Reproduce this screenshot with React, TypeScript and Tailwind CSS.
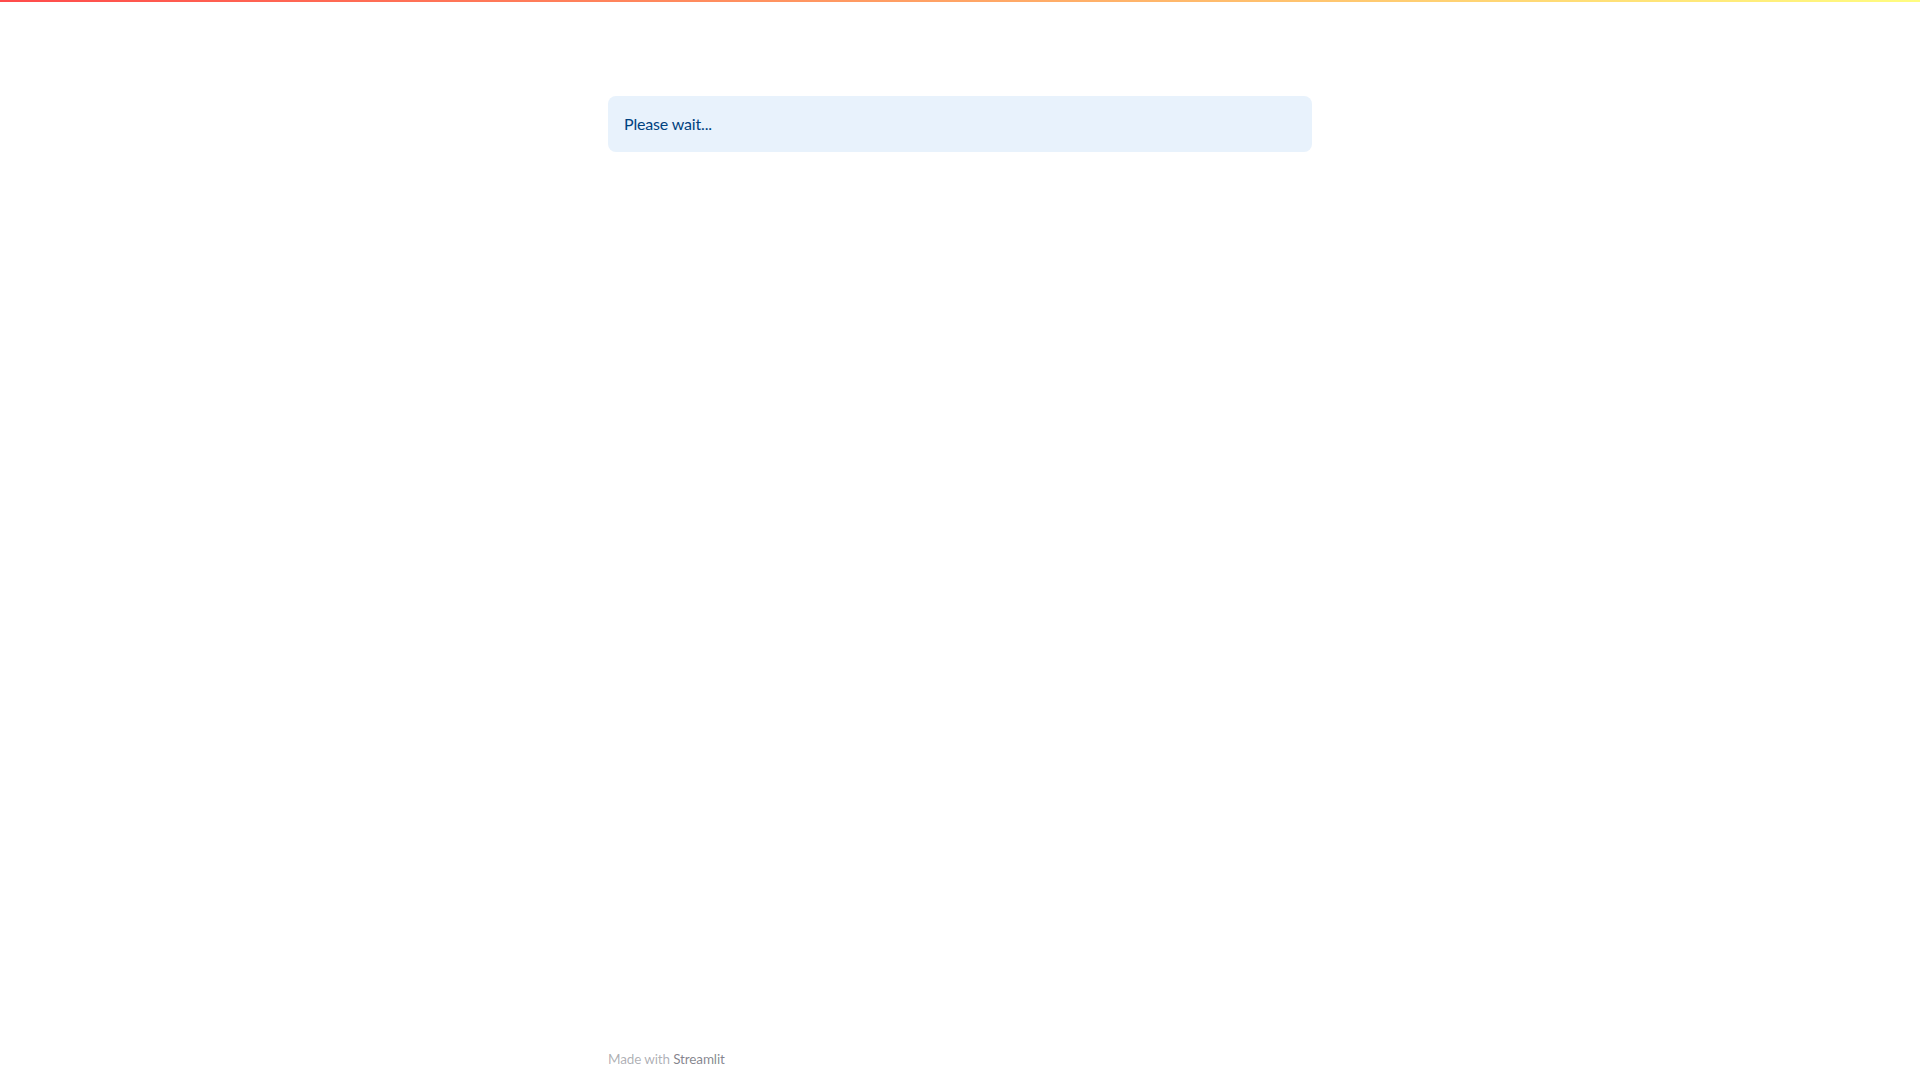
export default function App() {
  return (
    <div className="relative flex h-screen w-full flex-col bg-white" style={{ fontFamily: 'Lato, "Noto Sans", sans-serif' }}>
      <div className="absolute left-0 right-0 top-0 h-[2px] bg-[linear-gradient(90deg,#ff4b4b,#fffd80)]" />
      <div className="mx-auto w-[704px] flex-1 pt-[96px]">
        <div className="flex h-[56px] items-center rounded-[8px] bg-[#e8f2fc] px-4 text-[16px] tracking-[-0.01em] text-[#004280]">
          Please wait...
        </div>
      </div>
      <div className="mx-auto w-[704px] pb-[10px] text-[13.5px] leading-[22px] tracking-[-0.01em] text-[rgba(49,51,63,0.4)]">
        Made with <span className="text-[rgba(49,51,63,0.6)]">Streamlit</span>
      </div>
    </div>
  );
}
